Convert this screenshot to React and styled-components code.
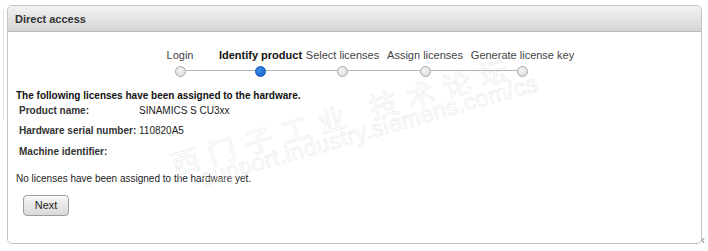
import React from "react";
import styled, { createGlobalStyle } from "styled-components";

const Global = createGlobalStyle`
  html, body { margin: 0; padding: 0; background: #fff; }
  body { font-family: "Liberation Sans", Arial, sans-serif; font-size: 10px; color: #222; }
`;

const Page = styled.div`
  position: relative;
  width: 708px;
  height: 251px;
  padding: 5px 0 0 7px;
  box-sizing: border-box;
`;

const Panel = styled.section`
  position: relative;
  width: 695px;
  height: 239px;
  box-sizing: border-box;
  border: 1px solid #c4c4c4;
  border-radius: 5px;
  background: #fff;
  overflow: hidden;
  display: flex;
  flex-direction: column;
`;

const Header = styled.header`
  height: 26px;
  box-sizing: border-box;
  padding: 0 7px;
  display: flex;
  align-items: center;
  font-weight: bold;
  font-size: 11px;
  color: #333;
  background: linear-gradient(#f2f2f2, #d6d6d6);
  border-bottom: 1px solid #b9b9b9;
`;

const Body = styled.div`
  position: relative;
  flex: 1;
  padding: 17px 8px 0 8px;
`;

const Stepper = styled.div`
  position: relative;
  z-index: 1;
  display: grid;
  grid-template-columns: 74px 87px 77px 88px 107px;
  margin-left: 127px;
  width: 433px;
`;

const Step = styled.div`
  position: relative;
  display: flex;
  flex-direction: column;
  align-items: center;
  gap: 4px;

  &::before, &::after {
    content: "";
    position: absolute;
    top: 21px;
    height: 1px;
    background: #b8b8b8;
    width: 50%;
  }
  &::before { left: 0; display: ${(p) => (p.$first ? "none" : "block")}; }
  &::after { right: 0; display: ${(p) => (p.$last ? "none" : "block")}; }
`;

const StepLabel = styled.span`
  white-space: nowrap;
  font-size: 11px;
  line-height: 13px;
  color: ${(p) => (p.$active ? "#111" : "#444")};
  font-weight: ${(p) => (p.$active ? "bold" : "normal")};
`;

const Dot = styled.span`
  position: relative;
  z-index: 1;
  width: 9px;
  height: 9px;
  border-radius: 50%;
  border: 1px solid ${(p) => (p.$active ? "#1559b0" : "#a8a8a8")};
  background: ${(p) =>
    p.$active
      ? "radial-gradient(circle at 40% 35%, #3a8ae6, #1262c8)"
      : "radial-gradient(circle at 40% 35%, #f4f4f4, #d8d8d8)"};
`;

const Intro = styled.p`
  margin: 13px 0 0 0;
  font-weight: bold;
  font-size: 10px;
  line-height: 12px;
  color: #111;
`;

const InfoTable = styled.div`
  display: grid;
  grid-template-columns: 120px auto;
  grid-auto-rows: 20.5px;
  align-items: center;
  padding-left: 3px;
  margin-top: -2px;
`;

const InfoLabel = styled.span`
  font-weight: bold;
  color: #333;
`;

const InfoValue = styled.span`
  color: #222;
`;

const Note = styled.p`
  margin: 11px 0 0 0;
  line-height: 12px;
  color: #222;
`;

const Button = styled.button`
  margin: 10px 0 0 7px;
  width: 46px;
  height: 21px;
  font-family: "Liberation Sans", Arial, sans-serif;
  font-size: 11px;
  color: #222;
  border: 1px solid #9c9c9c;
  border-radius: 4px;
  background: linear-gradient(#f7f7f7, #d9d9d9);
  box-shadow: inset 0 1px 0 #fff;
  padding: 0;
`;

const Watermark = styled.div`
  position: absolute;
  left: ${(p) => p.$x}px;
  top: ${(p) => p.$y}px;
  transform: rotate(-16deg);
  transform-origin: left top;
  white-space: nowrap;
  pointer-events: none;
  font-family: ${(p) => (p.$cjk ? '"Noto Sans CJK SC", sans-serif' : '"Liberation Sans", Arial, sans-serif')};
  font-size: ${(p) => p.$size}px;
  font-weight: normal;
  letter-spacing: ${(p) => p.$spacing}px;
  color: transparent;
  -webkit-text-stroke: 0.5px #e6e6e6;
`;

const SideLine = styled.div`
  position: absolute;
  left: 3px;
  top: 10px;
  width: 1px;
  height: 110px;
  background: #e6e6e6;
`;

const Grip = styled.span`
  position: absolute;
  left: 701px;
  top: 233px;
  font-size: 12px;
  color: #8a8a8a;
`;

const steps = [
  "Login",
  "Identify product",
  "Select licenses",
  "Assign licenses",
  "Generate license key",
];

export default function App() {
  return (
    <>
      <Global />
      <Page>
        <SideLine />
        <Panel>
          <Header>Direct access</Header>
          <Body>
            <Watermark $cjk $x={158} $y={113} $size={28} $spacing={10}>
              西门子工业 技术论坛
            </Watermark>
            <Watermark $x={190} $y={134} $size={23} $spacing={0.5}>
              support.industry.siemens.com/cs
            </Watermark>
            <Stepper>
              {steps.map((s, i) => (
                <Step key={s} $first={i === 0} $last={i === steps.length - 1}>
                  <StepLabel $active={i === 1}>{s}</StepLabel>
                  <Dot $active={i === 1} />
                </Step>
              ))}
            </Stepper>
            <Intro>The following licenses have been assigned to the hardware.</Intro>
            <InfoTable>
              <InfoLabel>Product name:</InfoLabel>
              <InfoValue>SINAMICS S CU3xx</InfoValue>
              <InfoLabel>Hardware serial number:</InfoLabel>
              <InfoValue>110820A5</InfoValue>
              <InfoLabel>Machine identifier:</InfoLabel>
              <InfoValue></InfoValue>
            </InfoTable>
            <Note>No licenses have been assigned to the hardware yet.</Note>
            <Button>Next</Button>
          </Body>
        </Panel>
        <Grip>‹</Grip>
      </Page>
    </>
  );
}
